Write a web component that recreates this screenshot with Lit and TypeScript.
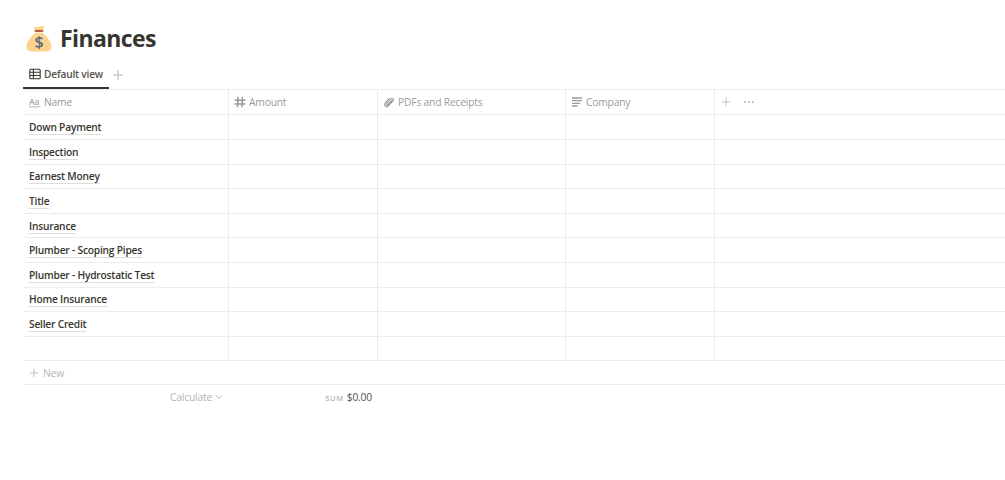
import { LitElement, html, css } from "lit";
import { customElement } from "lit/decorators.js";

const rows = ["Down Payment","Inspection","Earnest Money","Title","Insurance","Plumber - Scoping Pipes","Plumber - Hydrostatic Test","Home Insurance","Seller Credit",""];

@customElement("app-root")
export class AppRoot extends LitElement {
  static styles = css`
    :host { display: block; height: 480px; overflow: hidden; background: #fff; font-family: "Open Sans", "Noto Sans", sans-serif; color: #37352f; padding-left: 24px; box-sizing: border-box; }
    .title { display: flex; align-items: center; height: 30px; padding-top: 23px; gap: 7px; }
    .title h1 { margin: 0; font-size: 23px; font-weight: 700; line-height: 30px; letter-spacing: -0.6px; }
    .moneybag { width: 28px; height: 30px; margin-left: 1px; flex: none; }
    .tabs { display: flex; align-items: center; height: 36px; position: relative; }
    .tab { display: flex; align-items: center; gap: 3px; height: 36px; padding: 8px 6px 0 6px; margin-left: -1px; border-bottom: 2px solid #37352f; box-sizing: border-box; font-size: 10.2px; letter-spacing: -0.2px; font-weight: 600; color: #55534e; }
    .tabs .plus { margin: 7px 0 0 3px; color: #b5b4b1; }
    .row { display: grid; grid-template-columns: 205px 149px 188px 149px 1fr; height: 24.6px; box-sizing: border-box; border-bottom: 1px solid #edeceb; }
    .head { border-top: 1px solid #edeceb; height: 26.4px; }
    .cell { border-right: 1px solid #edeceb; display: flex; align-items: center; padding: 0 5px; min-width: 0; box-sizing: border-box; }
    .cell:last-child { border-right: none; }
    .hcell { font-size: 10.3px; letter-spacing: -0.2px; color: #9b9a97; gap: 3px; }
    .name { font-size: 10.2px; letter-spacing: -0.2px; font-weight: 600; color: #37352f; line-height: 14px; border-bottom: 1px solid #dddcda; white-space: nowrap; margin-top: 1px; }
    .actions { gap: 12px; padding-left: 6px; color: #b5b4b1; }
    svg { display: block; flex: none; }
    .new { display: flex; align-items: center; gap: 4px; height: 24px; padding-left: 5px; font-size: 10.3px; letter-spacing: -0.2px; color: #b5b4b1; border-bottom: 1px solid #edeceb; box-sizing: border-box; }
    .footer { display: grid; grid-template-columns: 205px 149px; height: 23px; align-items: center; font-size: 10.3px; letter-spacing: -0.2px; }
    .calc { display: flex; justify-content: flex-end; align-items: center; gap: 3px; padding-right: 6px; color: #b5b4b1; }
    .sum { display: flex; justify-content: flex-end; align-items: baseline; gap: 3px; padding-right: 6px; color: #55534e; }
    .sum small { font-size: 7.5px; letter-spacing: 0.7px; color: #9b9a97; }
  `;

  private plus(size = 11) {
    return html`<svg width=${size} height=${size} viewBox="0 0 12 12" fill="none" stroke="currentColor" stroke-width="1"><path d="M6 1v10M1 6h10"/></svg>`;
  }

  render() {
    return html`
      <div class="title">
        <svg class="moneybag" viewBox="0 0 28 30">
          <path d="M8.500 3.500c2 .9 3.500.9 5.500.2 2-.7 3.500-.6 5.500-.2l-2 5.500h-7z" fill="#fcd28c"/>
          <path d="M10.500 9.500C6 14 1.500 19 1.500 23.500c0 3.700 2.500 5 6 5h13c3.500 0 6-1.300 6-5 0-4.500-4.500-9.500-9-14z" fill="#fcd28c"/>
          <rect x="9.500" y="7" width="9" height="2" rx="1" fill="#b5603e"/>
          <text x="14" y="24.500" text-anchor="middle" font-family="Open Sans" font-size="16" font-weight="600" fill="#566b7a">$</text>
        </svg>
        <h1>Finances</h1>
      </div>
      <div class="tabs">
        <div class="tab">
          <svg width="12" height="12" viewBox="0 0 12 12" fill="none" stroke="#37352f" stroke-width="1.100"><rect x=".8" y="1.200" width="10.400" height="9.600" rx="1"/><path d="M.8 4.300h10.400M.8 7.500h10.400M4.400 1.200v9.600"/></svg>
          Default view
        </div>
        <span class="plus">${this.plus(12)}</span>
      </div>
      <div class="row head">
        <div class="cell hcell">
          <svg width="12" height="12" viewBox="0 0 12 12"><text x="0" y="8.500" font-family="Open Sans" font-size="8.500" font-weight="600" fill="#a5a4a1">Aa</text><path d="M0 10.800h11.500" stroke="#b5b4b1"/></svg>
          Name
        </div>
        <div class="cell hcell">
          <svg width="12" height="12" viewBox="0 0 12 12" fill="none" stroke="#9b9a97" stroke-width="1.500"><path d="M4 .7L3.500 11.300M8.500 .7L8 11.300M.7 4.200h10.800M.5 8h10.800"/></svg>
          Amount
        </div>
        <div class="cell hcell">
          <svg width="12" height="12" viewBox="0 0 12 12" fill="none" stroke="#9b9a97" stroke-width="1.100"><path d="M9.300 4.200L5 8.700c-.8.800-2 .2-1.600-.9L8 2.900c1.200-1.300 3.300.3 2.100 1.900L5 10c-1.800 1.600-4.500-.5-3-2.800L6.500 2"/></svg>
          PDFs and Receipts
        </div>
        <div class="cell hcell">
          <svg width="12" height="12" viewBox="0 0 12 12" fill="none" stroke="#9b9a97" stroke-width="1.300"><path d="M1 2h10M1 4.700h10M1 7.400h8M1 10h5.500"/></svg>
          Company
        </div>
        <div class="cell actions">
          ${this.plus(10)}
          <svg width="12" height="12" viewBox="0 0 12 12" fill="currentColor"><circle cx="2" cy="6" r="1"/><circle cx="6" cy="6" r="1"/><circle cx="10" cy="6" r="1"/></svg>
        </div>
      </div>
      ${rows.map((r) => html`
        <div class="row">
          <div class="cell">${r ? html`<span class="name">${r}</span>` : ""}</div>
          <div class="cell"></div><div class="cell"></div><div class="cell"></div><div class="cell"></div>
        </div>`)}
      <div class="new">${this.plus(10)}<span>New</span></div>
      <div class="footer">
        <div class="calc">Calculate
          <svg width="8" height="8" viewBox="0 0 8 8" fill="none" stroke="currentColor"><path d="M.8 2.500L4 5.500l3.200-3"/></svg>
        </div>
        <div class="sum"><small>SUM</small><span>$0.00</span></div>
      </div>
    `;
  }
}
